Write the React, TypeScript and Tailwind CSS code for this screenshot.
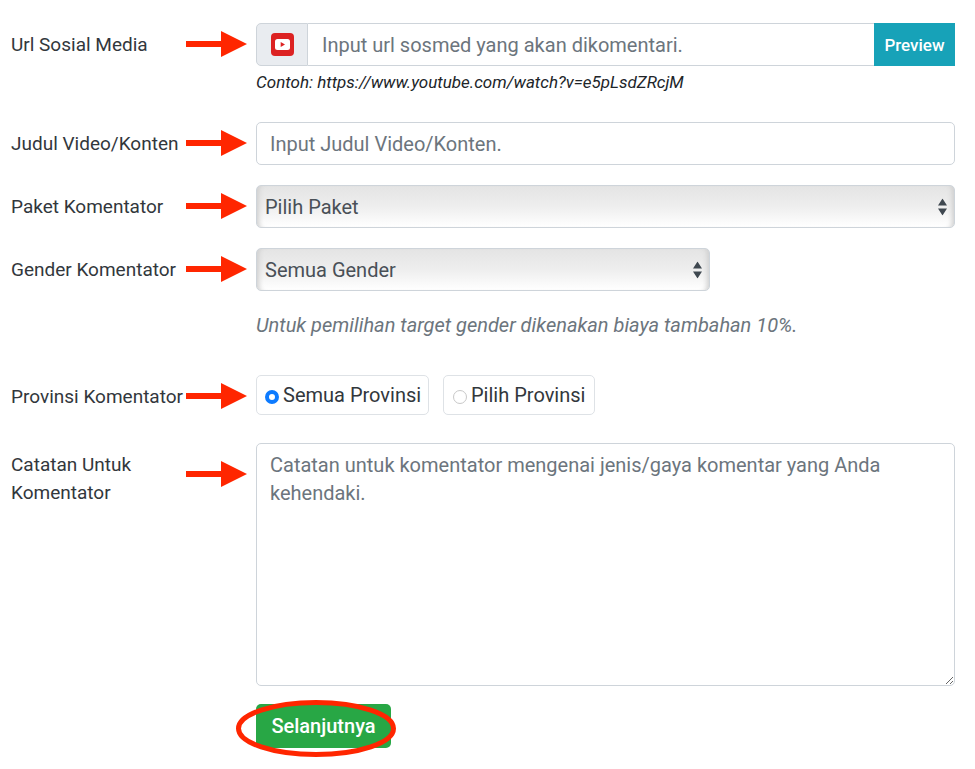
import type { ReactNode } from "react";

const Arrow = () => (
  <svg width="61" height="26" viewBox="0 0 61 26" className="shrink-0" aria-hidden="true">
    <path d="M0 10H35V0L61 13L35 26V16H0Z" fill="#ff2600" />
  </svg>
);

const Carets = () => (
  <svg
    width="9"
    height="17"
    viewBox="0 0 9 17"
    className="pointer-events-none absolute right-2 top-1/2 -translate-y-1/2"
    aria-hidden="true"
  >
    <path d="M4.5 0L9 7H0ZM0 10H9L4.5 17Z" fill="#3f4850" />
  </svg>
);

const YoutubeIcon = () => (
  <svg width="23" height="23" viewBox="0 0 23 23" aria-hidden="true">
    <rect width="23" height="23" rx="4" fill="#dc2222" />
    <rect x="4" y="6" width="15" height="11" rx="2.5" fill="#fff" />
    <path d="M9.7 9L14 11.5L9.7 14Z" fill="#dc2222" />
  </svg>
);

type RowProps = {
  label: string;
  htmlFor?: string;
  id?: string;
  tall?: boolean;
  children: ReactNode;
};

const Row = ({ label, htmlFor, id, tall, children }: RowProps) => (
  <div className="grid grid-cols-[175px_70px_minmax(0,1fr)] items-start">
    {htmlFor ? (
      <label htmlFor={htmlFor} className={tall ? "pt-2 text-[19px]" : "whitespace-nowrap pt-2 text-[19px]"}>
        {label}
      </label>
    ) : (
      <span id={id} className="whitespace-nowrap pt-2 text-[19px]">
        {label}
      </span>
    )}
    <div className={tall ? "pt-[18px]" : "pt-2"}>
      <Arrow />
    </div>
    <div className="min-w-0">{children}</div>
  </div>
);

const selectClass =
  "block h-[43px] w-full appearance-none rounded-[5px] border border-[#ced4da] bg-linear-to-b from-[#e4e4e4] via-[#eeeeee] to-white pl-2 pr-8 text-[#495057] shadow-[inset_6px_0_5px_-4px_#cfcfcf,inset_-6px_0_5px_-4px_#cfcfcf]";

const radioClass =
  "mt-1 size-[14px] shrink-0 appearance-none rounded-full border border-[#c8c8c8] bg-white checked:border-4 checked:border-[#0d7bff]";

const App = () => {
  return (
    <form
      className="min-h-screen bg-white pb-3 pl-[11px] pr-5 pt-[23px] font-[Roboto,sans-serif] text-xl leading-7 text-[#32373c]"
      onSubmit={(e) => e.preventDefault()}
    >
      <Row label="Url Sosial Media" htmlFor="url">
        <div className="flex h-[43px]">
          <div className="flex w-[52px] shrink-0 items-center justify-center rounded-l-[5px] border border-[#ced4da] bg-[#e9ecf0]">
            <YoutubeIcon />
          </div>
          <input
            id="url"
            type="text"
            placeholder="Input url sosmed yang akan dikomentari."
            className="min-w-0 flex-1 border-y border-[#ced4da] bg-white pl-[14px] placeholder:text-[#6c757d]"
          />
          <button type="button" className="w-[81px] shrink-0 bg-[#17a2b8] text-[17px] font-medium text-white">
            Preview
          </button>
        </div>
        <p className="pt-1 text-[17px] leading-6 italic text-[#212529]">
          Contoh: https://www.youtube.com/watch?v=e5pLsdZRcjM
        </p>
      </Row>

      <div className="mt-7">
        <Row label="Judul Video/Konten" htmlFor="judul">
          <input
            id="judul"
            type="text"
            placeholder="Input Judul Video/Konten."
            className="block h-[43px] w-full rounded-[5px] border border-[#ced4da] bg-white px-[13px] placeholder:text-[#6c757d]"
          />
        </Row>
      </div>

      <div className="mt-5">
        <Row label="Paket Komentator" htmlFor="paket">
          <div className="relative">
            <select id="paket" className={selectClass}>
              <option>Pilih Paket</option>
            </select>
            <Carets />
          </div>
        </Row>
      </div>

      <div className="mt-5">
        <Row label="Gender Komentator" htmlFor="gender">
          <div className="relative w-[65%]">
            <select id="gender" className={selectClass}>
              <option>Semua Gender</option>
            </select>
            <Carets />
          </div>
          <p className="pt-5 italic text-[#6c757d]">
            Untuk pemilihan target gender dikenakan biaya tambahan 10%.
          </p>
        </Row>
      </div>

      <div className="mt-9">
        <Row label="Provinsi Komentator" id="provinsi">
          <div role="radiogroup" aria-labelledby="provinsi" className="flex gap-[14px]">
            <label className="flex h-10 w-[173px] items-center gap-1 whitespace-nowrap rounded-[5px] border border-[#dee2e6] pl-2">
              <input type="radio" name="provinsi" defaultChecked className={radioClass} />
              Semua Provinsi
            </label>
            <label className="flex h-10 w-[152px] items-center gap-1 whitespace-nowrap rounded-[5px] border border-[#dee2e6] pl-[9px]">
              <input type="radio" name="provinsi" className={radioClass} />
              Pilih Provinsi
            </label>
          </div>
        </Row>
      </div>

      <div className="mt-7">
        <Row label="Catatan Untuk Komentator" htmlFor="catatan" tall>
          <textarea
            id="catatan"
            placeholder="Catatan untuk komentator mengenai jenis/gaya komentar yang Anda kehendaki."
            className="block h-[243px] w-full rounded-[5px] border border-[#ced4da] bg-white px-[13px] py-[7px] placeholder:text-[#6c757d]"
          />
        </Row>
      </div>

      <div className="mt-[18px] pl-[245px]">
        <div className="relative w-[135px]">
          <button type="submit" className="block h-11 w-full rounded-[5px] bg-[#28a745] font-medium text-white">
            Selanjutnya
          </button>
          <svg
            width="160"
            height="57"
            viewBox="0 0 160 57"
            className="pointer-events-none absolute -left-5 -top-1 max-w-none"
            aria-hidden="true"
          >
            <ellipse cx="80" cy="28.5" rx="77.5" ry="26" fill="none" stroke="#ff2600" strokeWidth="5" />
          </svg>
        </div>
      </div>
    </form>
  );
};

export default App;
